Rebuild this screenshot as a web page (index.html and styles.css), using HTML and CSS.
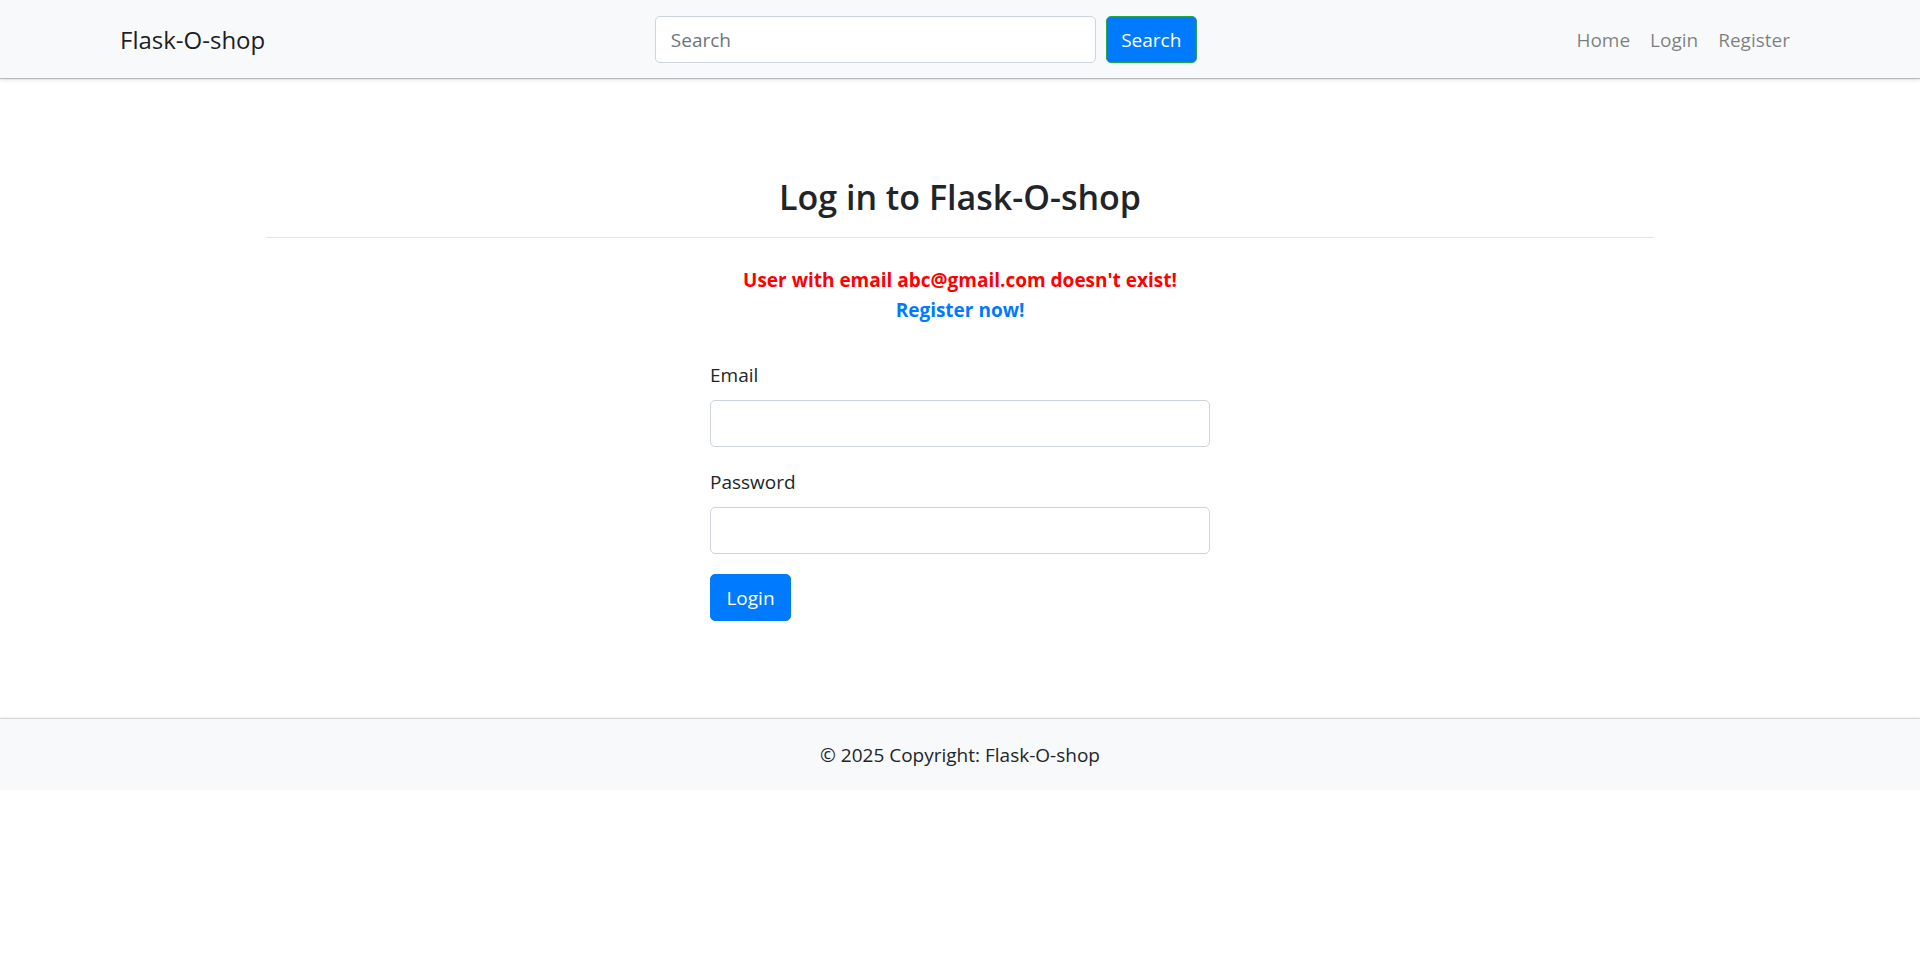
FILE: index.html
```html
<!DOCTYPE html>
<html lang="en">
<head>
<meta charset="utf-8">
<title>Login - Flask-O-shop</title>
<link rel="stylesheet" href="styles.css">
</head>
<body>
<nav class="navbar">
  <a class="brand" href="#">Flask-O-shop</a>
  <form class="search-form">
    <input class="search-input" type="search" placeholder="Search">
    <button class="search-btn" type="button">Search</button>
  </form>
  <ul class="nav-links">
    <li><a class="nav-link" href="#">Home</a></li>
    <li><a class="nav-link" href="#">Login</a></li>
    <li><a class="nav-link" href="#">Register</a></li>
  </ul>
</nav>

<main class="container">
  <h2 class="title">Log in to Flask-O-shop</h2>
  <hr class="divider">
  <div class="messages">
    <p class="msg-error">User with email abc@gmail.com doesn't exist!</p>
    <a class="msg-link" href="#">Register now!</a>
  </div>
  <form class="login-form">
    <div class="form-group">
      <label class="form-label" for="email">Email</label>
      <input class="form-control" id="email" type="email">
    </div>
    <div class="form-group">
      <label class="form-label" for="password">Password</label>
      <input class="form-control" id="password" type="password">
    </div>
    <button class="login-btn" type="button">Login</button>
  </form>
</main>

<footer class="footer">
  <span>© 2025 Copyright: Flask-O-shop</span>
</footer>
</body>
</html>
```

FILE: styles.css
```css
* { box-sizing: border-box; }

body {
  margin: 0;
  font-family: "Segoe UI", "Open Sans", "Noto Sans", sans-serif;
  font-size: 19px;
  line-height: 30px;
  color: #212529;
  background: #fff;
}

a { text-decoration: none; }

.navbar {
  height: 78px;
  display: flex;
  align-items: center;
  padding: 1px 120px 0;
  background: #f8f9fa;
  box-shadow: 0 1px 1px rgba(0,0,0,.22), 0 2px 5px rgba(0,0,0,.1);
  position: relative;
  z-index: 1;
}

.brand {
  font-size: 24px;
  color: rgba(0,0,0,.9);
  margin-right: 20px;
  line-height: 30px;
}

.search-form {
  display: flex;
  gap: 10px;
  margin: 0 auto;
}

.search-input {
  width: 441px;
  height: 47px;
  border: 1px solid #ced4da;
  border-radius: 5px;
  padding: 0 15px;
  font: inherit;
  color: #495057;
  background: #fff;
}
.search-input::placeholder { color: #6c757d; }

.search-btn {
  width: 91px;
  height: 47px;
  border: 1px solid #28a745;
  border-radius: 5px;
  background: #007bff;
  color: #fff;
  font: inherit;
  padding: 0;
}

.nav-links {
  display: flex;
  list-style: none;
  margin: 0;
  padding: 0;
}

.nav-link {
  display: block;
  padding: 0 10px;
  color: rgba(0,0,0,.5);
}

.container {
  width: 1388px;
  margin: 0 auto;
  padding: 95px 0 98px;
  text-align: center;
}

.title {
  margin: 0;
  font-size: 34px;
  font-weight: 600;
  line-height: 48px;
}

.divider {
  margin: 16px 0 0;
  border: 0;
  border-top: 1px solid rgba(0,0,0,.1);
}

.messages {
  margin-top: 27px;
  font-weight: 700;
  font-size: 19px;
}

.msg-error {
  margin: 0;
  color: #ff0000;
}

.msg-link {
  display: block;
  color: #007bff;
}

.login-form {
  width: 500px;
  margin: 35px auto 0;
  text-align: left;
}

.form-group {
  display: flex;
  flex-direction: column;
  margin-bottom: 20px;
}

.form-label {
  margin-bottom: 10px;
}

.form-control {
  height: 47px;
  border: 1px solid #ced4da;
  border-radius: 5px;
  padding: 0 15px;
  font: inherit;
  background: #fff;
}

.login-btn {
  width: 81px;
  height: 47px;
  border: 1px solid #007bff;
  border-radius: 5px;
  background: #007bff;
  color: #fff;
  font: inherit;
  padding: 0;
}

.footer {
  height: 71px;
  display: flex;
  align-items: center;
  justify-content: center;
  background: #f8f9fa;
  box-shadow: 0 -1px 1px rgba(0,0,0,.12), 0 1px 2px rgba(0,0,0,.22), 0 0 6px rgba(0,0,0,.08);
}
```
